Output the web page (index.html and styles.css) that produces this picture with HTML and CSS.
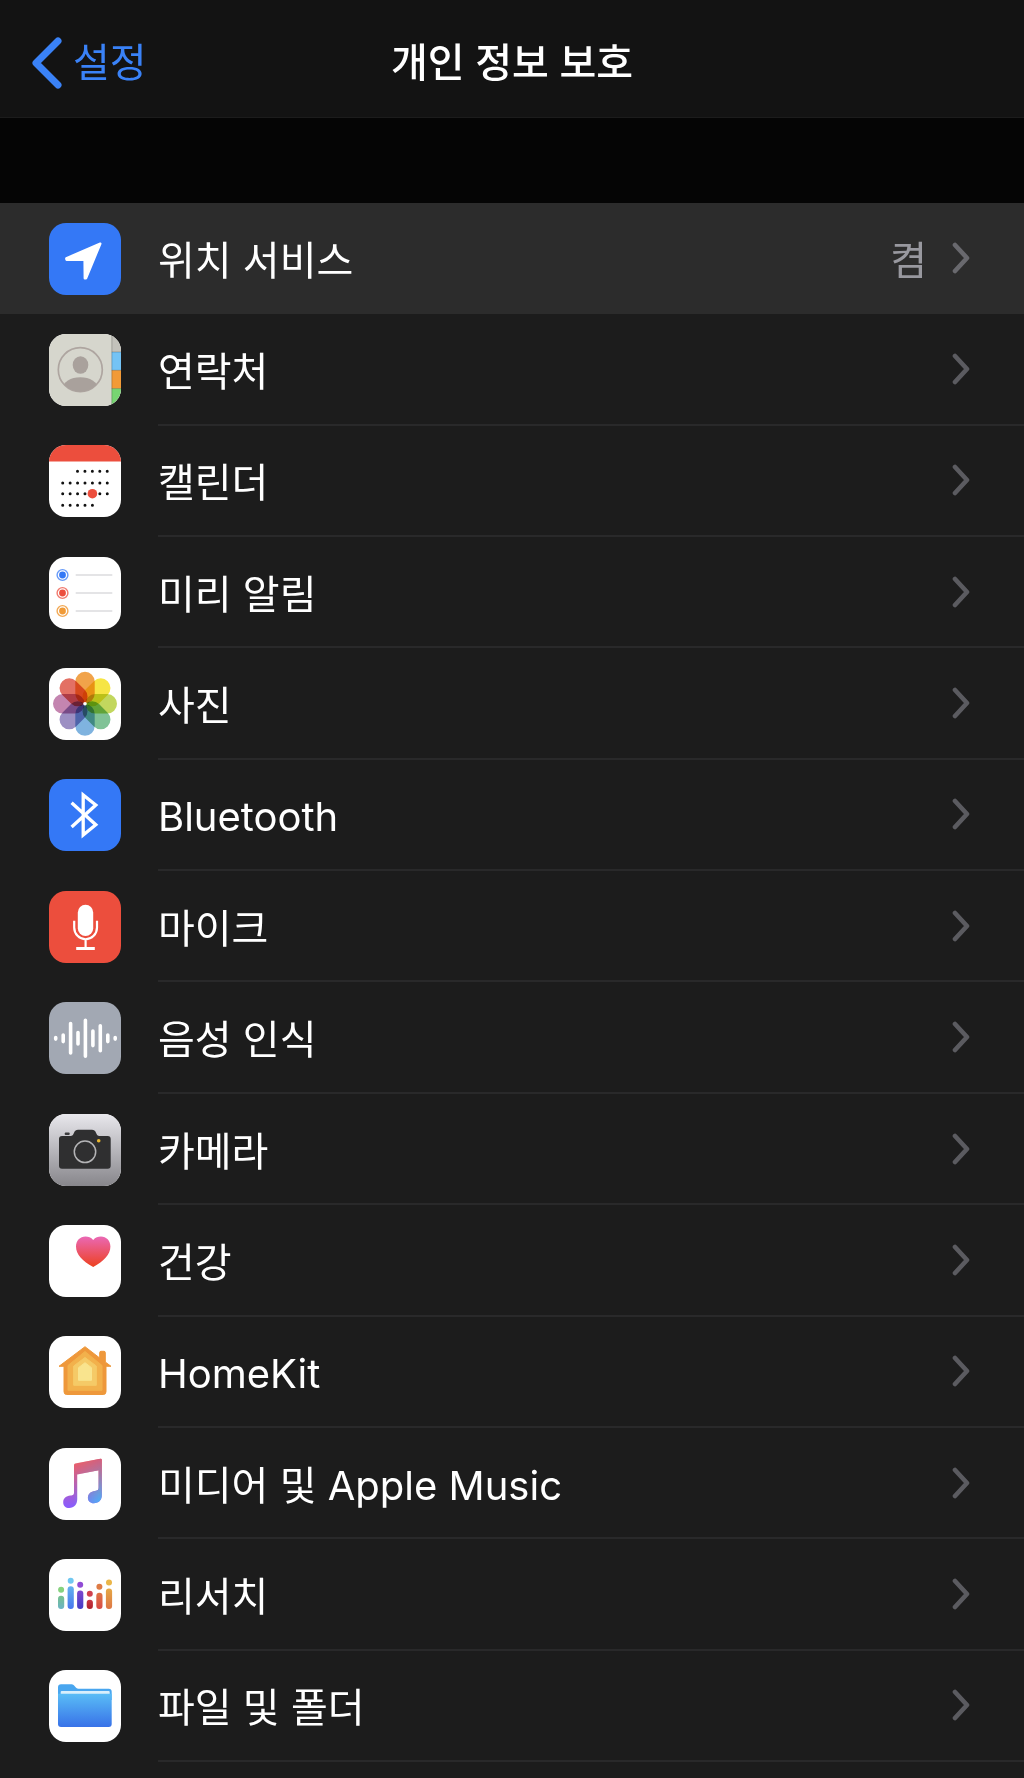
FILE: index.html
```html
<!DOCTYPE html>
<html lang="ko">
<head>
    <meta charset="UTF-8">
    <meta name="viewport" content="width=device-width, initial-scale=1.0">
    <title>개인 정보 보호</title>
    <link rel="stylesheet" href="styles.css">
</head>
<body>
    <!-- Shared shapes -->
    <svg class="defs" aria-hidden="true">
        <defs>
            <symbol id="chevron" viewBox="0 0 18 32">
                <path d="M3 3 L15 16 L3 29" fill="none" stroke="currentColor" stroke-width="4.6" stroke-linecap="round" stroke-linejoin="round"/>
            </symbol>
            <linearGradient id="cameraBg" x1="0" y1="0" x2="0" y2="1">
                <stop offset="0" stop-color="#e8e7ec"/><stop offset="1" stop-color="#87868b"/>
            </linearGradient>
            <linearGradient id="heartFill" x1="0" y1="0" x2="0" y2="1">
                <stop offset="0" stop-color="#ea68b4"/><stop offset="1" stop-color="#ed4120"/>
            </linearGradient>
            <linearGradient id="noteLeft" gradientUnits="userSpaceOnUse" x1="0" y1="14" x2="0" y2="58">
                <stop offset="0" stop-color="#f05f63"/><stop offset="1" stop-color="#8b5cfb"/>
            </linearGradient>
            <linearGradient id="noteRight" gradientUnits="userSpaceOnUse" x1="0" y1="12" x2="0" y2="52">
                <stop offset="0" stop-color="#d2607f"/><stop offset="1" stop-color="#54a8f2"/>
            </linearGradient>
            <linearGradient id="fade" gradientUnits="userSpaceOnUse" x1="24" y1="0" x2="50" y2="0">
                <stop offset="0" stop-color="#000"/><stop offset="1" stop-color="#fff"/>
            </linearGradient>
            <mask id="noteMask" maskUnits="userSpaceOnUse" x="0" y="0" width="72" height="72">
                <rect width="72" height="72" fill="url(#fade)"/>
            </mask>
            <linearGradient id="folderFill" x1="0" y1="0" x2="0" y2="1">
                <stop offset="0" stop-color="#5abdf6"/><stop offset="1" stop-color="#3872e8"/>
            </linearGradient>
            <linearGradient id="bar1" x1="0" y1="0" x2="0" y2="1"><stop offset="0" stop-color="#76c18c"/><stop offset="1" stop-color="#6bb3c6"/></linearGradient>
            <linearGradient id="bar2" x1="0" y1="0" x2="0" y2="1"><stop offset="0" stop-color="#62b1ee"/><stop offset="1" stop-color="#4877ee"/></linearGradient>
            <linearGradient id="bar3" x1="0" y1="0" x2="0" y2="1"><stop offset="0" stop-color="#7d48cf"/><stop offset="1" stop-color="#423cc4"/></linearGradient>
            <linearGradient id="bar4" x1="0" y1="0" x2="0" y2="1"><stop offset="0" stop-color="#c93745"/><stop offset="1" stop-color="#ae2029"/></linearGradient>
            <linearGradient id="bar5" x1="0" y1="0" x2="0" y2="1"><stop offset="0" stop-color="#de7545"/><stop offset="1" stop-color="#d84a45"/></linearGradient>
            <linearGradient id="bar6" x1="0" y1="0" x2="0" y2="1"><stop offset="0" stop-color="#e5a845"/><stop offset="1" stop-color="#dd7645"/></linearGradient>
            <clipPath id="avatarClip"><circle cx="31.3" cy="35.7" r="22"/></clipPath>
        </defs>
    </svg>

    <header class="navbar">
        <a class="back" href="#">
            <svg class="back-arrow" viewBox="0 0 30 52" aria-hidden="true"><path d="M26 4 L4 26 L26 48" fill="none" stroke="currentColor" stroke-width="7" stroke-linecap="round" stroke-linejoin="round"/></svg>
            <span>설정</span>
        </a>
        <h1 class="title">개인 정보 보호</h1>
    </header>

    <main class="settings">
        <ul class="list">
            <li>
                <a class="row active" href="#">
                    <svg class="icon blue" viewBox="0 0 72 72" aria-hidden="true">
                        <path d="M51.3 20.7 L17.3 35.3 L17.5 36.7 L35.6 36.7 L35.8 55.3 L37 55.3 Z" fill="#fff" stroke="#fff" stroke-width="2.4" stroke-linejoin="round"/>
                    </svg>
                    <span class="content"><span class="label">위치 서비스</span><span class="value">켬</span><svg class="chevron" aria-hidden="true"><use href="#chevron"/></svg></span>
                </a>
            </li>
            <li>
                <a class="row" href="#">
                    <svg class="icon" viewBox="0 0 72 72" aria-hidden="true">
                        <rect width="72" height="72" fill="#d6d6cd"/>
                        <rect x="62.7" width="10" height="18" fill="#c3c2bb"/>
                        <rect x="62.7" y="18" width="10" height="18.3" fill="#74c3f5"/>
                        <rect x="62.7" y="36.3" width="10" height="18.3" fill="#f29a37"/>
                        <rect x="62.7" y="54.6" width="10" height="18" fill="#77d572"/>
                        <path d="M62.7 18 H72 M62.7 36.3 H72 M62.7 54.6 H72 M62.9 0 V72" stroke="#000" stroke-opacity=".2" stroke-width="1"/>
                        <circle cx="31.3" cy="35.7" r="22" fill="none" stroke="#aea5a0" stroke-width="1.7"/>
                        <ellipse cx="31.5" cy="31" rx="7.8" ry="8.8" fill="#a9a19c"/>
                        <ellipse cx="31.3" cy="54" rx="17.5" ry="10.7" fill="#a9a19c" clip-path="url(#avatarClip)"/>
                    </svg>
                    <span class="content"><span class="label">연락처</span><svg class="chevron" aria-hidden="true"><use href="#chevron"/></svg></span>
                </a>
            </li>
            <li>
                <a class="row" href="#">
                    <svg class="icon" viewBox="0 0 72 72" aria-hidden="true">
                        <rect width="72" height="16.5" fill="#ec4e3d"/>
                        <path d="M28.5 26.3 H59 M13.7 38 H59 M13.7 48.7 H59 M13.7 60.3 H44" stroke="#111" stroke-width="3" stroke-linecap="round" stroke-dasharray="0 7.43"/>
                        <circle cx="43.4" cy="48.7" r="4.8" fill="#ec4e3d"/>
                    </svg>
                    <span class="content"><span class="label">캘린더</span><svg class="chevron" aria-hidden="true"><use href="#chevron"/></svg></span>
                </a>
            </li>
            <li>
                <a class="row" href="#">
                    <svg class="icon" viewBox="0 0 72 72" aria-hidden="true">
                        <path d="M26.7 18 H63.3 M26.7 36 H63.3 M26.7 54 H63.3" stroke="#e4e4e6" stroke-width="1.8"/>
                        <circle cx="13.5" cy="18" r="3.4" fill="#3478f6"/><circle cx="13.5" cy="18" r="5.4" fill="none" stroke="#3478f6" stroke-opacity=".75" stroke-width="1.4"/>
                        <circle cx="13.5" cy="36" r="3.4" fill="#ec4e3d"/><circle cx="13.5" cy="36" r="5.4" fill="none" stroke="#ec4e3d" stroke-opacity=".75" stroke-width="1.4"/>
                        <circle cx="13.5" cy="54" r="3.4" fill="#f09a37"/><circle cx="13.5" cy="54" r="5.4" fill="none" stroke="#f09a37" stroke-opacity=".85" stroke-width="1.4"/>
                    </svg>
                    <span class="content"><span class="label">미리 알림</span><svg class="chevron" aria-hidden="true"><use href="#chevron"/></svg></span>
                </a>
            </li>
            <li>
                <a class="row" href="#">
                    <svg class="icon" viewBox="0 0 72 72" aria-hidden="true">
                        <g class="petals" transform="translate(36 35.8)">
                            <rect x="-9.7" y="-32" width="19.4" height="31.6" rx="9.7" fill="#f1a34a"/>
                            <rect x="-9.7" y="-32" width="19.4" height="31.6" rx="9.7" fill="#f6e544" transform="rotate(45)"/>
                            <rect x="-9.7" y="-32" width="19.4" height="31.6" rx="9.7" fill="#c2d75e" transform="rotate(90)"/>
                            <rect x="-9.7" y="-32" width="19.4" height="31.6" rx="9.7" fill="#80c296" transform="rotate(135)"/>
                            <rect x="-9.7" y="-32" width="19.4" height="31.6" rx="9.7" fill="#7fb3df" transform="rotate(180)"/>
                            <rect x="-9.7" y="-32" width="19.4" height="31.6" rx="9.7" fill="#9c8fc3" transform="rotate(225)"/>
                            <rect x="-9.7" y="-32" width="19.4" height="31.6" rx="9.7" fill="#c485b0" transform="rotate(270)"/>
                            <rect x="-9.7" y="-32" width="19.4" height="31.6" rx="9.7" fill="#e37064" transform="rotate(315)"/>
                        </g>
                        <circle cx="36" cy="35.8" r="1.8" fill="#fff"/>
                    </svg>
                    <span class="content"><span class="label">사진</span><svg class="chevron" aria-hidden="true"><use href="#chevron"/></svg></span>
                </a>
            </li>
            <li>
                <a class="row" href="#">
                    <svg class="icon blue" viewBox="0 0 72 72" aria-hidden="true">
                        <path d="M22.6 23.8 L46.8 45.8 L34.2 56 V16 L46.8 26 L22.6 48" fill="none" stroke="#fff" stroke-width="3.3"/>
                    </svg>
                    <span class="content"><span class="label">Bluetooth</span><svg class="chevron" aria-hidden="true"><use href="#chevron"/></svg></span>
                </a>
            </li>
            <li>
                <a class="row" href="#">
                    <svg class="icon red" viewBox="0 0 72 72" aria-hidden="true">
                        <rect x="28.8" y="13.7" width="15.4" height="31.3" rx="7.7" fill="#fff"/>
                        <path d="M25.2 29.7 V36.5 A11.4 11.8 0 0 0 48 36.5 V29.7 M36.6 48.5 V57" fill="none" stroke="#fff" stroke-width="2.2"/>
                        <path d="M27.2 57.5 H45.8" stroke="#fff" stroke-width="2.8"/>
                    </svg>
                    <span class="content"><span class="label">마이크</span><svg class="chevron" aria-hidden="true"><use href="#chevron"/></svg></span>
                </a>
            </li>
            <li>
                <a class="row" href="#">
                    <svg class="icon gray" viewBox="0 0 72 72" aria-hidden="true">
                        <path d="M6.7 35.5 V37.1 M14.2 33 V39.6 M21.6 21.6 V51 M29 30.6 V42 M36.4 18.3 V54.3 M43.9 29 V43.6 M51.3 23.8 V48.8 M58.8 33 V39.6 M66.2 35.5 V37.1" stroke="#fff" stroke-width="3.6" stroke-linecap="round"/>
                    </svg>
                    <span class="content"><span class="label">음성 인식</span><svg class="chevron" aria-hidden="true"><use href="#chevron"/></svg></span>
                </a>
            </li>
            <li>
                <a class="row" href="#">
                    <svg class="icon" viewBox="0 0 72 72" aria-hidden="true">
                        <rect width="72" height="72" fill="url(#cameraBg)"/>
                        <rect x="15.7" y="18.5" width="5" height="2.5" rx="1" fill="#3c3c3e"/>
                        <path d="M13 22 H21.5 C23.5 22 24 21 25 18.8 C26 16.5 27 15.8 29 15.8 H43 C45 15.8 46 16.5 47 18.8 C48 21 48.5 22 50.5 22 H58.7 Q61.7 22 61.7 25 V51.7 Q61.7 54.7 58.7 54.7 H13 Q10 54.7 10 51.7 V25 Q10 22 13 22 Z" fill="#2f2f30"/>
                        <circle cx="36" cy="37.8" r="10.7" fill="none" stroke="#b4b4b6" stroke-width="1.5"/>
                        <circle cx="49.7" cy="26.7" r="1.8" fill="#eab82f"/>
                    </svg>
                    <span class="content"><span class="label">카메라</span><svg class="chevron" aria-hidden="true"><use href="#chevron"/></svg></span>
                </a>
            </li>
            <li>
                <a class="row" href="#">
                    <svg class="icon" viewBox="0 0 72 72" aria-hidden="true">
                        <path d="M44.2 15 C42 12.6 39.4 11.6 36.5 11.6 C31 11.6 27 15.8 27 21.6 C27 29.8 33.5 36.2 44.2 42 C54.9 36.2 61.4 29.8 61.4 21.6 C61.4 15.8 57.4 11.6 51.9 11.6 C49 11.6 46.4 12.6 44.2 15 Z" fill="url(#heartFill)"/>
                    </svg>
                    <span class="content"><span class="label">건강</span><svg class="chevron" aria-hidden="true"><use href="#chevron"/></svg></span>
                </a>
            </li>
            <li>
                <a class="row" href="#">
                    <svg class="icon" viewBox="0 0 72 72" aria-hidden="true">
                        <g stroke-linejoin="round">
                            <path d="M36 10.7 L50.7 22 V16.5 Q50.7 15.3 52 15.3 H55 Q56.3 15.3 56.3 16.5 V26 L62 30.3 H57 V55.7 Q57 58.5 54.2 58.5 H17.8 Q15 58.5 15 55.7 V30.3 H10 Z" fill="#ee983b" stroke="#ee983b" stroke-width="1"/>
                            <path d="M36 15.5 L53 29.5 V54.3 H19 V29.5 Z" fill="#f2b14c" stroke="#f2b14c" stroke-width="1"/>
                            <path d="M36 21.5 L47.3 30 V49.3 H24.7 V30 Z" fill="#f5ca67" stroke="#f5ca67" stroke-width="1"/>
                            <path d="M36 26.7 L42.5 31.7 V44.3 H29.5 V31.7 Z" fill="#f9e48e" stroke="#f9e48e" stroke-width="1"/>
                        </g>
                    </svg>
                    <span class="content"><span class="label">HomeKit</span><svg class="chevron" aria-hidden="true"><use href="#chevron"/></svg></span>
                </a>
            </li>
            <li>
                <a class="row" href="#">
                    <svg class="icon" viewBox="0 0 72 72" aria-hidden="true">
                        <defs>
                            <path id="note" d="M26.3 15.4 L51.5 10.7 Q52.8 10.5 52.8 11.9 V47 C52.8 52 49.8 55.2 44.8 55.2 C41.2 55.2 38.9 52.9 38.9 49.7 C38.9 45.5 42 43.6 46 42.9 C48.8 42.4 49.6 42 49.6 39.5 V22.3 L28.2 26.6 V51 C28.2 56.5 25.2 60 20.2 60 C16.6 60 14.2 57.6 14.2 54.4 C14.2 50.2 17.2 48.3 21.3 47.6 C24.2 47.1 25 46.6 25 44.2 V17 Q25 15.6 26.3 15.4 Z"/>
                        </defs>
                        <use href="#note" fill="url(#noteLeft)"/>
                        <use href="#note" fill="url(#noteRight)" mask="url(#noteMask)"/>
                    </svg>
                    <span class="content"><span class="label">미디어 및 Apple Music</span><svg class="chevron" aria-hidden="true"><use href="#chevron"/></svg></span>
                </a>
            </li>
            <li>
                <a class="row" href="#">
                    <svg class="icon" viewBox="0 0 72 72" aria-hidden="true">
                        <circle cx="12.1" cy="30.7" r="3" fill="#86d27e"/><rect x="9" y="36.7" width="6.2" height="13.3" rx="3" fill="url(#bar1)"/>
                        <circle cx="21.7" cy="21.7" r="3" fill="#71c8f1"/><rect x="18.6" y="27.3" width="6.2" height="22.7" rx="3" fill="url(#bar2)"/>
                        <circle cx="31.2" cy="25.7" r="3" fill="#904bd5"/><rect x="28.1" y="31.5" width="6.2" height="18.5" rx="3" fill="url(#bar3)"/>
                        <circle cx="40.8" cy="34.7" r="3" fill="#d0414f"/><rect x="37.7" y="40.7" width="6.2" height="9.3" rx="3" fill="url(#bar4)"/>
                        <circle cx="50.4" cy="27.8" r="3" fill="#de7b45"/><rect x="47.3" y="33.7" width="6.2" height="16.3" rx="3" fill="url(#bar5)"/>
                        <circle cx="60" cy="23.4" r="3" fill="#ebb649"/><rect x="56.9" y="29.5" width="6.2" height="20.5" rx="3" fill="url(#bar6)"/>
                    </svg>
                    <span class="content"><span class="label">리서치</span><svg class="chevron" aria-hidden="true"><use href="#chevron"/></svg></span>
                </a>
            </li>
            <li>
                <a class="row" href="#">
                    <svg class="icon" viewBox="0 0 72 72" aria-hidden="true">
                        <path d="M9 30 V17.3 Q9 14.3 12 14.3 H22.5 C26 14.3 26 18.7 29.5 18.7 H59.7 Q62.7 18.7 62.7 21.7 V30 Z" fill="#49a6ef"/>
                        <rect x="11.7" y="21" width="49" height="4" rx="1" fill="#d9effc"/>
                        <path d="M9 23.7 H62.7 V54 Q62.7 57 59.7 57 H12 Q9 57 9 54 Z" fill="url(#folderFill)"/>
                    </svg>
                    <span class="content"><span class="label">파일 및 폴더</span><svg class="chevron" aria-hidden="true"><use href="#chevron"/></svg></span>
                </a>
            </li>
        </ul>
    </main>
</body>
</html>
```
FILE: styles.css
```css
* {
    box-sizing: border-box;
}
body {
    display: flex;
    flex-direction: column;
    min-height: 100vh;
    margin: 0;
    background-color: #050505;
    color: #fff;
    font-family: Inter, "Noto Sans CJK KR", sans-serif;
    font-size: 40px;
    line-height: 48px;
}
a {
    color: inherit;
    text-decoration: none;
}
.defs {
    position: absolute;
    width: 0;
    height: 0;
}
/* Top bar */
.navbar {
    display: grid;
    grid-template-columns: 1fr auto 1fr;
    align-items: center;
    padding: 37px 32px 28px;
    background-color: #131313;
    border-bottom: 1px solid #1c1c1c;
}
.back {
    display: flex;
    align-items: center;
    gap: 11px;
    color: #3a82f7;
}
.back-arrow {
    width: 30px;
    height: 52px;
}
.title {
    margin: 0;
    font-size: 40px;
    font-weight: 500;
}
/* Settings list */
.settings {
    display: flex;
    flex: 1;
    flex-direction: column;
    margin-top: 85px;
    padding-bottom: 16px;
    background-color: #1c1c1c;
}
.list {
    display: grid;
    flex: 1;
    grid-auto-rows: 1fr;
    margin: 0;
    padding: 0;
    list-style: none;
}
.row {
    display: flex;
    align-items: center;
    gap: 37px;
    height: 100%;
    min-height: 104px;
    padding-left: 49px;
}
.row.active {
    background-color: #2c2c2c;
}
.icon {
    flex: none;
    width: 72px;
    height: 72px;
    border-radius: 17px;
    background-color: #fff;
}
.icon.blue {
    background-color: #3478f6;
}
.icon.red {
    background-color: #ec4e3d;
}
.icon.gray {
    background-color: #a2a8b3;
}
.petals {
    isolation: isolate;
}
.petals rect {
    mix-blend-mode: multiply;
}
.content {
    display: flex;
    flex: 1;
    align-items: center;
    align-self: stretch;
    padding-right: 54px;
    border-bottom: 2px solid #29292a;
}
.active .content {
    border-bottom-color: transparent;
}
.label {
    flex: 1;
    padding-top: 6px;
}
.value {
    padding-top: 6px;
    margin-right: 25px;
    color: #98989f;
}
.chevron {
    flex: none;
    width: 18px;
    height: 32px;
    color: #5b5b60;
}
.active .chevron {
    color: #69696e;
}
```
